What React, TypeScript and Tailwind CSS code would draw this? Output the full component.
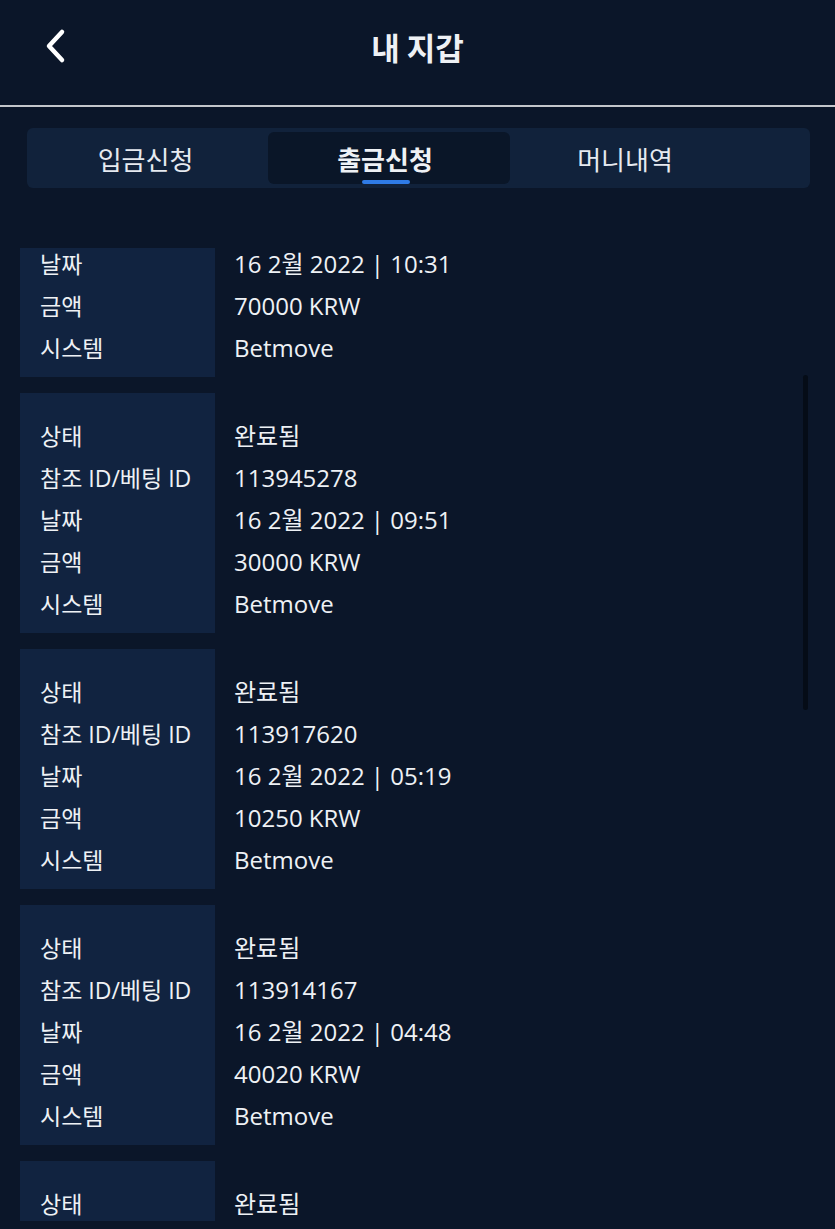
import React from "react";

type Row = [string, string];
const cards: Row[][] = [
  [["상태", "완료됨"], ["참조 ID/베팅 ID", "113961002"], ["날짜", "16 2월 2022 | 10:31"], ["금액", "70000 KRW"], ["시스템", "Betmove"]],
  [["상태", "완료됨"], ["참조 ID/베팅 ID", "113945278"], ["날짜", "16 2월 2022 | 09:51"], ["금액", "30000 KRW"], ["시스템", "Betmove"]],
  [["상태", "완료됨"], ["참조 ID/베팅 ID", "113917620"], ["날짜", "16 2월 2022 | 05:19"], ["금액", "10250 KRW"], ["시스템", "Betmove"]],
  [["상태", "완료됨"], ["참조 ID/베팅 ID", "113914167"], ["날짜", "16 2월 2022 | 04:48"], ["금액", "40020 KRW"], ["시스템", "Betmove"]],
  [["상태", "완료됨"], ["참조 ID/베팅 ID", "113900511"], ["날짜", "16 2월 2022 | 03:12"], ["금액", "20000 KRW"], ["시스템", "Betmove"]],
];

export default function App() {
  return (
    <div className="w-[835px] h-[1229px] bg-[#0b1629] text-[#eef1f5] font-['Open_Sans','Noto_Sans_CJK_KR',sans-serif] overflow-hidden flex flex-col">
      <div className="relative h-[105px] flex items-center justify-center shrink-0">
        <div className="absolute left-[42px] top-[28px]">
          <svg width="28" height="36" viewBox="0 0 28 36" fill="none">
            <path d="M20 4 L7 18 L20 32" stroke="white" strokeWidth="4.5" strokeLinecap="round" strokeLinejoin="round" />
          </svg>
        </div>
        <div className="text-[31px] font-bold font-['Noto_Sans_CJK_KR',sans-serif] -mt-[10px]">내 지갑</div>
      </div>
      <div className="h-[2px] bg-[#c3c6cb] shrink-0" />
      <div className="mt-[21px] ml-[27px] mr-[25px] h-[60px] rounded-[6px] bg-[#11223b] flex items-center shrink-0">
        <div className="w-[241px] h-[52px] flex items-center justify-center text-[26px] text-[#e6eaf0] font-['Noto_Sans_CJK_KR',sans-serif]">
          <span className="-ml-[4px]">입금신청</span>
        </div>
        <div className="relative w-[242px] h-[52px] rounded-[6px] bg-[#0a1628] flex items-center justify-center text-[26px] font-bold font-['Noto_Sans_CJK_KR',sans-serif]">
          <span className="-ml-[8px]">출금신청</span>
          <div className="absolute bottom-[0px] left-[94px] w-[48px] h-[4px] rounded-full bg-[#2f7be6]" />
        </div>
        <div className="w-[242px] h-[52px] flex items-center justify-center text-[26px] text-[#e6eaf0] font-['Noto_Sans_CJK_KR',sans-serif]">
          <span className="-ml-[12px]">머니내역</span>
        </div>
      </div>
      <div className="relative mt-[60px] h-[973px] overflow-hidden shrink-0">
        <div className="-mt-[111px] flex flex-col gap-[16px] px-[20px]">
          {cards.map((rows, i) => (
            <div key={i} className="flex">
              <div className="w-[195px] bg-[#112340] pt-[22px] pb-[8px] pl-[20px]">
                {rows.map(([k]) => (
                  <div key={k} className="h-[42px] leading-[42px] text-[23px] whitespace-nowrap">{k}</div>
                ))}
              </div>
              <div className="pl-[19px] pt-[22px] pb-[8px]">
                {rows.map(([k, v]) => (
                  <div key={k} className="h-[42px] leading-[42px] text-[24px] whitespace-nowrap">{v}</div>
                ))}
              </div>
            </div>
          ))}
        </div>
        <div className="absolute left-[803px] top-[127px] w-[5px] h-[335px] rounded-full bg-[#050c17]" />
      </div>
    </div>
  );
}
